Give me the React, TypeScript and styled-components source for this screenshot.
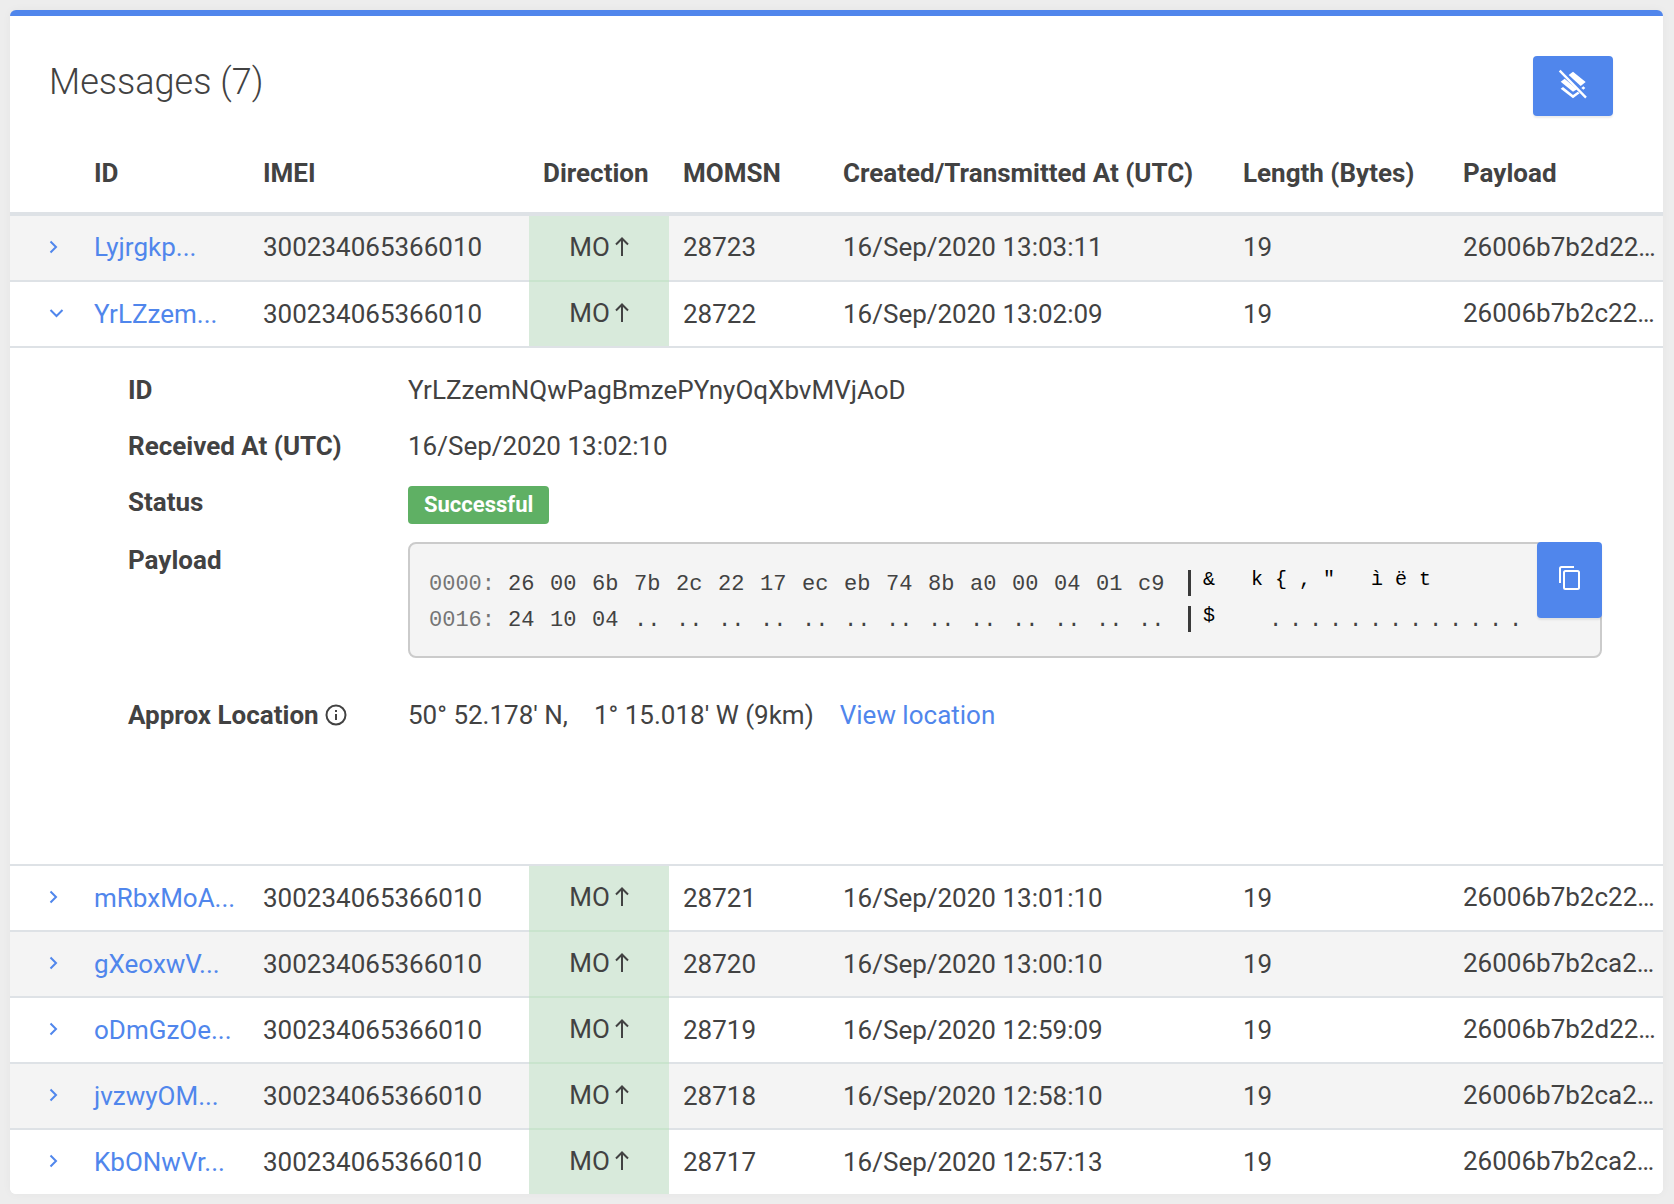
import React from 'react';
import styled, { createGlobalStyle, css } from 'styled-components';

const colors = {
  page: '#ededed',
  text: '#424242',
  blue: '#5086ec',
  line: '#dee2e6',
  stripe: '#f4f4f4',
  greenCell: '#d8eadb',
  greenLine: '#c9e4cd',
  success: '#5fb064',
};

const GlobalStyle = createGlobalStyle`
  *, *::before, *::after { box-sizing: border-box; }
  body {
    margin: 0;
    background: ${colors.page};
    color: ${colors.text};
    font: 400 26px/36px Roboto, 'Liberation Sans', sans-serif;
  }
`;

const Page = styled.main`
  padding: 10px 11px 10px 10px;
`;

const Card = styled.section`
  background: #fff;
  border-top: 6px solid ${colors.blue};
  border-radius: 6px;
  overflow: hidden;
  box-shadow: 0 0 10px rgba(0, 0, 0, 0.04);
`;

const CardHeader = styled.header`
  display: flex;
  align-items: flex-start;
  justify-content: space-between;
  padding: 40px 50px 20px 39px;
`;

const Title = styled.h1`
  margin: 0;
  padding-top: 4px;
  font-size: 36px;
  line-height: 44px;
  font-weight: 300;
`;

const BlueButton = styled.button`
  display: flex;
  align-items: center;
  justify-content: center;
  padding: 0 0 4px;
  border: 0;
  border-radius: 4px;
  background: ${colors.blue};
  color: #fff;
  box-shadow: 0 2px 2px rgba(0, 0, 0, 0.08);
  cursor: pointer;
`;

const LayersButton = styled(BlueButton)`
  width: 80px;
  height: 60px;
`;

const Table = styled.table`
  width: 100%;
  table-layout: fixed;
  border-collapse: separate;
  border-spacing: 0;
`;

const Column = styled.col<{ $width?: number }>`
  ${({ $width }) => $width && css`width: ${$width}px;`}
`;

const HeadCell = styled.th`
  height: 80px;
  padding: 0 14px 2px;
  border-bottom: 4px solid ${colors.line};
  text-align: left;
  font-weight: 700;
  white-space: nowrap;
`;

const Row = styled.tr<{ $striped?: boolean }>`
  background: ${({ $striped }) => ($striped ? colors.stripe : '#fff')};

  &:first-child > td {
    height: 64px;
    padding-bottom: 2px;
    border-top: 0;
  }
`;

const Cell = styled.td`
  height: 66px;
  padding: 0 14px;
  border-top: 2px solid ${colors.line};
  white-space: nowrap;
`;

const PayloadCell = styled(Cell)`
  padding-bottom: 2px;
`;

const DirectionCell = styled(Cell)<{ $joined: boolean }>`
  padding-bottom: 2px;
  background: ${colors.greenCell};
  border-top-color: ${({ $joined }) => ($joined ? colors.greenLine : colors.line)};
`;

const Direction = styled.span`
  display: flex;
  align-items: center;
  justify-content: center;
  gap: 5px;
`;

const ToggleCell = styled(Cell)`
  padding: 0 0 2px 38px;
`;

const ToggleButton = styled.button`
  display: flex;
  padding: 0;
  border: 0;
  background: none;
  color: ${colors.blue};
  cursor: pointer;
`;

const Link = styled.a`
  color: ${colors.blue};
  text-decoration: none;
`;

const DetailCell = styled.td`
  height: 518px;
  padding: 24px 61px 0 118px;
  border-top: 2px solid ${colors.line};
  vertical-align: top;
`;

const Details = styled.dl`
  display: grid;
  grid-template-columns: 280px 1fr;
  row-gap: 20px;
  margin: 0;
`;

const Term = styled.dt`
  display: flex;
  align-items: center;
  align-self: start;
  gap: 6px;
  font-weight: 700;
`;

const Value = styled.dd`
  margin: 0;
`;

const Badge = styled.span`
  display: block;
  width: fit-content;
  margin: 2px 0 -2px;
  padding: 0 16px;
  border-radius: 4px;
  background: ${colors.success};
  color: #fff;
  font-size: 22px;
  line-height: 38px;
  font-weight: 700;
`;

const PayloadBox = styled.div`
  position: relative;
  margin-bottom: 19px;
  padding: 21px 18px 19px;
  border: 2px solid #cbcbcb;
  border-radius: 8px;
  background: ${colors.stripe};
  font-family: 'Liberation Mono', monospace;
  font-size: 22px;
  line-height: 40px;
`;

const HexLine = styled.div`
  display: flex;
  height: 36px;
`;

const Offset = styled.span`
  width: 80px;
  padding-left: 1px;
  color: #757575;
`;

const Byte = styled.span`
  width: 42px;
`;

const Divider = styled.span`
  width: 3px;
  height: 26px;
  margin: 5px 6px 0 8px;
  background: #3a3a3a;
`;

const Char = styled.span`
  width: 24px;
  color: #000;
  font-size: 20px;
  line-height: 30px;
  text-align: center;
`;

const EmptyChar = styled.span`
  width: 20px;
`;

const CopyButton = styled(BlueButton)`
  position: absolute;
  top: -2px;
  right: -2px;
  width: 65px;
  height: 76px;
`;

const Location = styled(Value)`
  display: flex;
  gap: 26px;
`;

type Message = {
  id: string;
  momsn: number;
  created: string;
  payload: string;
  striped?: boolean;
  open?: boolean;
  joined?: boolean;
};

const messages: Message[] = [
  { id: 'Lyjrgkp...', momsn: 28723, created: '16/Sep/2020 13:03:11', payload: '26006b7b2d22…', striped: true },
  { id: 'YrLZzem...', momsn: 28722, created: '16/Sep/2020 13:02:09', payload: '26006b7b2c22…', open: true, joined: true },
  { id: 'mRbxMoA...', momsn: 28721, created: '16/Sep/2020 13:01:10', payload: '26006b7b2c22…' },
  { id: 'gXeoxwV...', momsn: 28720, created: '16/Sep/2020 13:00:10', payload: '26006b7b2ca2…', striped: true, joined: true },
  { id: 'oDmGzOe...', momsn: 28719, created: '16/Sep/2020 12:59:09', payload: '26006b7b2d22…', joined: true },
  { id: 'jvzwyOM...', momsn: 28718, created: '16/Sep/2020 12:58:10', payload: '26006b7b2ca2…', striped: true, joined: true },
  { id: 'KbONwVr...', momsn: 28717, created: '16/Sep/2020 12:57:13', payload: '26006b7b2ca2…', joined: true },
];

const hexLines = [
  {
    offset: '0000:',
    bytes: '26 00 6b 7b 2c 22 17 ec eb 74 8b a0 00 04 01 c9'.split(' '),
    chars: ['&', '', 'k', '{', ',', '"', '', 'ì', 'ë', 't'],
    empty: 0,
  },
  {
    offset: '0016:',
    bytes: '24 10 04 .. .. .. .. .. .. .. .. .. .. .. .. ..'.split(' '),
    chars: ['$', '', ''],
    empty: 13,
  },
];

const Chevron = ({ open }: { open?: boolean }) => (
  <svg width="16" height="16" viewBox="0 0 16 16" fill="none" stroke="currentColor" strokeWidth="2" aria-hidden="true">
    <path d={open ? 'M2.5 5l6 6 6-6' : 'M2.5 2.5l5.5 5.5-5.5 5.5'} />
  </svg>
);

const ArrowUp = () => (
  <svg width="14" height="22" viewBox="0 0 14 22" fill="none" stroke="currentColor" strokeWidth="2" aria-hidden="true">
    <path d="M7 20V2.5M1 8.5l6-6 6 6" />
  </svg>
);

const LayersOffIcon = () => (
  <svg width="30" height="30" viewBox="0 0 90 90" fill="currentColor" aria-hidden="true">
    <path d="M32 18 45 8 83 39 68 51z" />
    <path d="M8 38 20 29 57 61 45 68z" />
    <path d="M8 59 15 54 45 78 59 68 65 73 45 88z" />
    <path d="M76 52 82 57 76 62 70 57z" />
    <path d="M5 5 84 86" fill="none" stroke="currentColor" strokeWidth="7" />
  </svg>
);

const CopyIcon = () => (
  <svg width="24" height="26" viewBox="0 0 24 26" fill="none" stroke="currentColor" strokeWidth="2" aria-hidden="true">
    <path d="M2 18V3.5Q2 2 3.5 2H16" />
    <rect x="6" y="6" width="15" height="18" rx="1.5" />
  </svg>
);

const InfoIcon = () => (
  <svg width="22" height="22" viewBox="0 0 22 22" fill="none" stroke="currentColor" strokeWidth="2" aria-hidden="true">
    <circle cx="11" cy="11" r="9.5" />
    <path d="M11 10v6M11 6v2" />
  </svg>
);

const MessageDetails = () => (
  <Details>
    <Term>ID</Term>
    <Value>YrLZzemNQwPagBmzePYnyOqXbvMVjAoD</Value>
    <Term>Received At (UTC)</Term>
    <Value>16/Sep/2020 13:02:10</Value>
    <Term>Status</Term>
    <Value><Badge>Successful</Badge></Value>
    <Term>Payload</Term>
    <Value>
      <PayloadBox>
        {hexLines.map((line) => (
          <HexLine key={line.offset}>
            <Offset>{line.offset}</Offset>
            {line.bytes.map((byte, i) => <Byte key={i}>{byte}</Byte>)}
            <Divider />
            {line.chars.map((char, i) => <Char key={i}>{char}</Char>)}
            {Array.from({ length: line.empty }, (_, i) => <EmptyChar key={i}>.</EmptyChar>)}
          </HexLine>
        ))}
        <CopyButton type="button" aria-label="Copy payload"><CopyIcon /></CopyButton>
      </PayloadBox>
    </Value>
    <Term>Approx Location <InfoIcon /></Term>
    <Location>
      <span>50° 52.178' N,</span>
      <span>1° 15.018' W (9km)</span>
      <Link href="#location">View location</Link>
    </Location>
  </Details>
);

export default function App() {
  return (
    <Page>
      <GlobalStyle />
      <Card>
        <CardHeader>
          <Title>Messages (7)</Title>
          <LayersButton type="button" aria-label="Clear layers"><LayersOffIcon /></LayersButton>
        </CardHeader>
        <Table>
          <colgroup>
            <Column $width={70} />
            <Column $width={169} />
            <Column $width={280} />
            <Column $width={140} />
            <Column $width={160} />
            <Column $width={400} />
            <Column $width={220} />
            <Column />
          </colgroup>
          <thead>
            <tr>
              <HeadCell />
              <HeadCell>ID</HeadCell>
              <HeadCell>IMEI</HeadCell>
              <HeadCell>Direction</HeadCell>
              <HeadCell>MOMSN</HeadCell>
              <HeadCell>Created/Transmitted At (UTC)</HeadCell>
              <HeadCell>Length (Bytes)</HeadCell>
              <HeadCell>Payload</HeadCell>
            </tr>
          </thead>
          <tbody>
            {messages.map((m) => (
              <React.Fragment key={m.id}>
                <Row $striped={m.striped}>
                  <ToggleCell>
                    <ToggleButton type="button" aria-expanded={!!m.open} aria-label="Toggle details">
                      <Chevron open={m.open} />
                    </ToggleButton>
                  </ToggleCell>
                  <Cell><Link href={`#${m.momsn}`}>{m.id}</Link></Cell>
                  <Cell>300234065366010</Cell>
                  <DirectionCell $joined={!!m.joined}>
                    <Direction>MO <ArrowUp /></Direction>
                  </DirectionCell>
                  <Cell>{m.momsn}</Cell>
                  <Cell>{m.created}</Cell>
                  <Cell>19</Cell>
                  <PayloadCell>{m.payload}</PayloadCell>
                </Row>
                {m.open && (
                  <tr>
                    <DetailCell colSpan={8}><MessageDetails /></DetailCell>
                  </tr>
                )}
              </React.Fragment>
            ))}
          </tbody>
        </Table>
      </Card>
    </Page>
  );
}
